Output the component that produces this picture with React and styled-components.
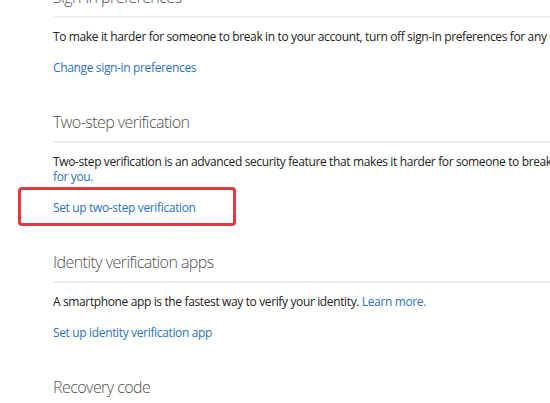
import styled, { createGlobalStyle } from "styled-components";

const GlobalStyle = createGlobalStyle`
    html, body {
        margin: 0;
        padding: 0;
        background: #ffffff;
        overflow: hidden;
    }
    body {
        font-family: "Open Sans", "Noto Sans", sans-serif;
    }
`;

const Page = styled.div`
    width: 1200px;
    margin-top: -14px;
    padding-left: 53px;
`;

const Section = styled.section`
    margin-bottom: 36px;
`;

const Heading = styled.h2`
    margin: 0;
    font-size: 16px;
    font-weight: 300;
    letter-spacing: -0.55px;
    line-height: 22px;
    color: #505050;
    padding-bottom: 8px;
    border-bottom: 2px solid #ededed;
`;

const Body = styled.p`
    margin: 11px 0 0;
    font-size: 12px;
    letter-spacing: -0.37px;
    line-height: 15px;
    color: #222222;
`;

const Link = styled.a`
    color: #2a72c8;
    text-decoration: none;
    cursor: pointer;
`;

const LinkRow = styled.div`
    margin-top: 16px;
    font-size: 12px;
    letter-spacing: -0.35px;
    line-height: 15px;
`;

/* red annotation frame drawn over the link */
const Highlight = styled.span`
    position: relative;
    display: inline-block;
    height: 15px;
    line-height: 15px;
    vertical-align: top;

    &::after {
        content: "";
        position: absolute;
        left: -35px;
        right: -40px;
        top: -13px;
        bottom: -11px;
        border: 3px solid #e8363c;
        border-radius: 4px;
        pointer-events: none;
    }
`;

const App = () => {
    return (
        <Page>
            <GlobalStyle />
            <Section>
                <Heading>Sign-in preferences</Heading>
                <Body>
                    To make it harder for someone to break in to your account, turn off sign-in
                    preferences for any devices you don't use.
                </Body>
                <LinkRow>
                    <Link>Change sign-in preferences</Link>
                </LinkRow>
            </Section>
            <Section>
                <Heading>Two-step verification</Heading>
                <Body>
                    Two-step verification is an advanced security feature that makes it harder for
                    someone to break in to your account.{" "}
                    <Link>
                        Find out whether two-step verification is right
                        <br />
                        for you.
                    </Link>
                </Body>
                <LinkRow>
                    <Highlight>
                        <Link>Set up two-step verification</Link>
                    </Highlight>
                </LinkRow>
            </Section>
            <Section>
                <Heading>Identity verification apps</Heading>
                <Body>
                    A smartphone app is the fastest way to verify your identity.{" "}
                    <Link>Learn more.</Link>
                </Body>
                <LinkRow>
                    <Link>Set up identity verification app</Link>
                </LinkRow>
            </Section>
            <Section>
                <Heading>Recovery code</Heading>
                <Body>
                    A recovery code can help you get back into your account if you forget your
                    password.
                </Body>
            </Section>
        </Page>
    );
};

export default App;
